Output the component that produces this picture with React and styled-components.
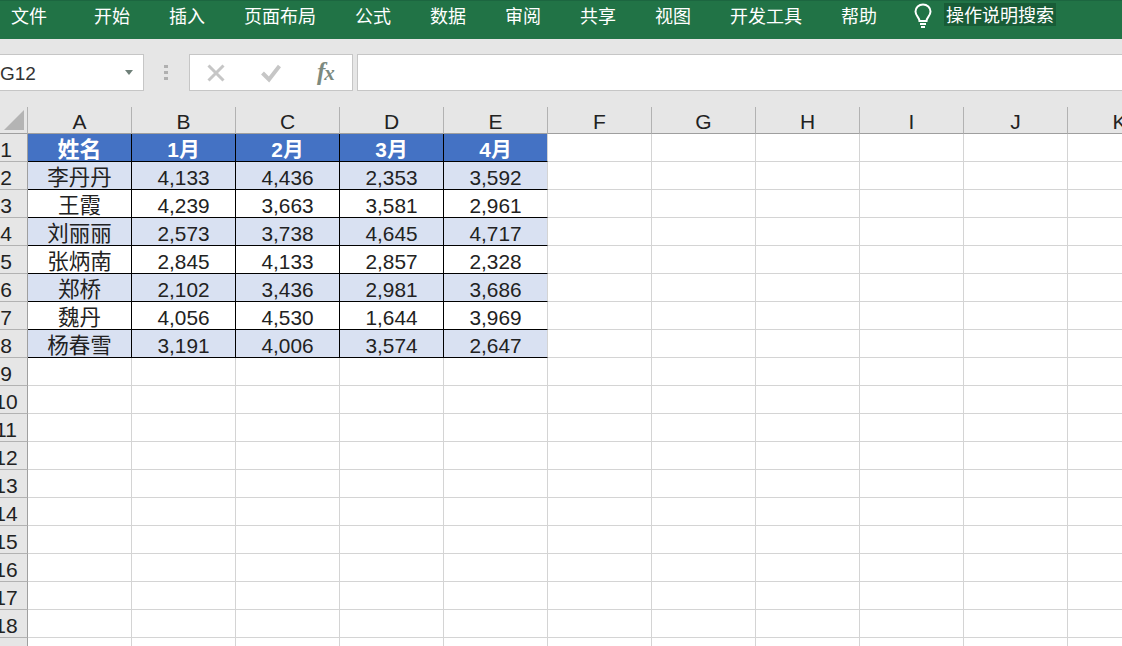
import React from "react";
import styled, { createGlobalStyle } from "styled-components";

const Global = createGlobalStyle`
  html, body { margin: 0; padding: 0; background: #fff; overflow: hidden; }
  body { width: 1122px; height: 646px; font-family: "Liberation Sans", "Noto Sans CJK SC", sans-serif; }
  #root { width: 1122px; height: 646px; overflow: hidden; }
`;

const Page = styled.div`
  width: 1122px;
  height: 646px;
  overflow: hidden;
  display: flex;
  flex-direction: column;
`;

const Ribbon = styled.div`
  height: 39px;
  flex: none;
  box-sizing: border-box;
  background: #217346;
  border-top: 1px solid #1c6640;
  display: flex;
  align-items: flex-start;
  padding-left: 11px;
  color: #fff;
  font: 400 18px/28px "Noto Sans CJK SC", sans-serif;
`;

const Tab = styled.div`
  flex: none;
  margin-right: ${(p) => p.$gap}px;
`;

const Bulb = styled.svg`
  flex: none;
  width: 20px;
  height: 26px;
  margin-right: 13px;
  margin-top: 2px;
`;

const Search = styled.div`
  flex: none;
  background: #185c37;
  height: 23px;
  line-height: 23px;
  margin-top: 2px;
  margin-left: -2px;
  padding: 0 2px;
`;

const FormulaBar = styled.div`
  height: 68px;
  flex: none;
  box-sizing: border-box;
  background: #e6e6e6;
  padding-top: 15px;
  display: flex;
  align-items: flex-start;
`;

const NameBox = styled.div`
  flex: none;
  box-sizing: border-box;
  width: 146px;
  height: 37px;
  margin-left: -2px;
  padding: 2px 0 0 1px;
  background: #fff;
  border: 1px solid #c6c6c6;
  display: flex;
  align-items: center;
  justify-content: space-between;
  color: #333;
  font-size: 19px;
`;

const Caret = styled.span`
  width: 0;
  height: 0;
  margin: -2px 10px 0 0;
  border-left: 4px solid transparent;
  border-right: 4px solid transparent;
  border-top: 5px solid #6f8079;
`;

const Dots = styled.div`
  flex: none;
  width: 45px;
  height: 37px;
  display: flex;
  flex-direction: column;
  align-items: center;
  justify-content: center;
  gap: 3px;
  margin-left: -1px;
  margin-right: 1px;
`;

const Dot = styled.span`
  width: 4px;
  height: 3px;
  background: #b0b0b0;
`;

const FnBox = styled.div`
  flex: none;
  box-sizing: border-box;
  width: 164px;
  height: 37px;
  background: #fff;
  border: 1px solid #c6c6c6;
  display: flex;
  align-items: center;
  padding-left: 17px;
`;

const FnIcon = styled.svg`
  flex: none;
  width: ${(p) => p.$size}px;
  height: ${(p) => p.$size}px;
  margin-right: ${(p) => p.$gap}px;
`;

const Fx = styled.span`
  font: italic 700 25px/1 "Liberation Serif", serif;
  color: #7c8a7f;
  margin: -3px 0 0 1px;
  letter-spacing: -1px;
`;

const FxSub = styled.span`
  font-size: 21px;
`;

const FormulaInput = styled.div`
  flex: none;
  box-sizing: border-box;
  width: 780px;
  height: 37px;
  margin-left: 4px;
  background: #fff;
  border: 1px solid #c6c6c6;
`;

const Sheet = styled.div`
  flex: none;
  display: grid;
  grid-template-columns: 28px repeat(11, 104px);
  grid-template-rows: 27px repeat(19, 28px);
  width: 1172px;
`;

const Corner = styled.div`
  box-sizing: border-box;
  background: #e6e6e6;
  border-right: 1px solid #b2b2b2;
  border-bottom: 1px solid #9f9f9f;
  display: flex;
  padding: 3px 0 0 4px;
`;

const ColHead = styled.div`
  box-sizing: border-box;
  background: #e6e6e6;
  border-right: 1px solid #b2b2b2;
  border-bottom: 1px solid #9f9f9f;
  color: #222;
  font-size: 21px;
  line-height: 30px;
  text-align: center;
`;

const RowHead = styled.div`
  box-sizing: border-box;
  background: #e6e6e6;
  border-right: 1px solid #9f9f9f;
  border-bottom: 1px solid #b2b2b2;
  color: #222;
  font-size: 21px;
  line-height: 32px;
  white-space: nowrap;
  display: flex;
  justify-content: center;
  padding-right: 15px;
  width: 28px;
`;

const Cell = styled.div`
  box-sizing: border-box;
  background: ${(p) => (p.$kind === "head" ? "#4472c4" : p.$kind === "band" ? "#d9e1f2" : "#fff")};
  color: ${(p) => (p.$kind === "head" ? "#fff" : "#222")};
  font-weight: ${(p) => (p.$kind === "head" ? 700 : 400)};
  font-family: "Liberation Sans", "Noto Sans CJK SC", sans-serif;
  font-size: ${(p) => (p.$name ? (p.$kind === "head" ? "22px" : "21.5px") : "20.8px")};
  line-height: 32px;
  text-align: center;
  border-right: 1px solid ${(p) => (p.$inner ? "#000" : "#d4d4d4")};
  border-bottom: 1px solid ${(p) => (p.$table ? "#000" : "#d4d4d4")};
`;

const cols = "ABCDEFGHIJK".split("");
const table = [
  ["姓名", "1月", "2月", "3月", "4月"],
  ["李丹丹", "4,133", "4,436", "2,353", "3,592"],
  ["王霞", "4,239", "3,663", "3,581", "2,961"],
  ["刘丽丽", "2,573", "3,738", "4,645", "4,717"],
  ["张炳南", "2,845", "4,133", "2,857", "2,328"],
  ["郑桥", "2,102", "3,436", "2,981", "3,686"],
  ["魏丹", "4,056", "4,530", "1,644", "3,969"],
  ["杨春雪", "3,191", "4,006", "3,574", "2,647"],
];
const tabs = [
  ["文件", 47], ["开始", 39], ["插入", 39], ["页面布局", 39], ["公式", 39], ["数据", 39],
  ["审阅", 39], ["共享", 39], ["视图", 39], ["开发工具", 39], ["帮助", 36],
];

export default function App() {
  const rows = [];
  for (let r = 0; r < 19; r++) {
    const row = table[r];
    const kind = r === 0 ? "head" : r % 2 === 1 ? "band" : "plain";
    rows.push(<RowHead key={`h${r}`}><span>{r + 1}</span></RowHead>);
    cols.forEach((c, i) => {
      const inTable = row && i < 5;
      rows.push(
        <Cell
          key={`${c}${r}`}
          $kind={inTable ? kind : "plain"}
          $table={inTable}
          $inner={row && i < 4}
          $name={i === 0}
        >
          {inTable ? row[i] : ""}
        </Cell>
      );
    });
  }
  return (
    <Page>
      <Global />
      <Ribbon>
        {tabs.map(([t, g]) => (
          <Tab key={t} $gap={g}>{t}</Tab>
        ))}
        <Bulb viewBox="0 0 20 26" fill="none" stroke="#fff" strokeWidth="2">
          <path d="M6.5 18 C6.5 14.5 2.5 13 2.5 8.5 A7.5 7 0 0 1 17.5 8.5 C17.5 13 13.5 14.5 13.5 18 Z" />
          <path d="M7 21 H13 M8 24 H12" />
        </Bulb>
        <Search>操作说明搜索</Search>
      </Ribbon>
      <FormulaBar>
        <NameBox>
          <span>G12</span>
          <Caret />
        </NameBox>
        <Dots><Dot /><Dot /><Dot /></Dots>
        <FnBox>
          <FnIcon $size={18} $gap={36} viewBox="0 0 18 18" fill="none" stroke="#c6c6c6" strokeWidth="3">
            <path d="M1.5 1.5 L16.5 16.5 M16.5 1.5 L1.5 16.5" />
          </FnIcon>
          <FnIcon $size={20} $gap={35} viewBox="0 0 20 20" fill="none" stroke="#c6c6c6" strokeWidth="4">
            <path d="M1.5 10 L8 16.5 L18.5 3" />
          </FnIcon>
          <Fx>f<FxSub>x</FxSub></Fx>
        </FnBox>
        <FormulaInput />
      </FormulaBar>
      <Sheet>
        <Corner>
          <svg width="20" height="20" viewBox="0 0 20 20">
            <path d="M20 0 V20 H0 Z" fill="#b4b4b4" />
          </svg>
        </Corner>
        {cols.map((c) => (
          <ColHead key={c}>{c}</ColHead>
        ))}
        {rows}
      </Sheet>
    </Page>
  );
}
